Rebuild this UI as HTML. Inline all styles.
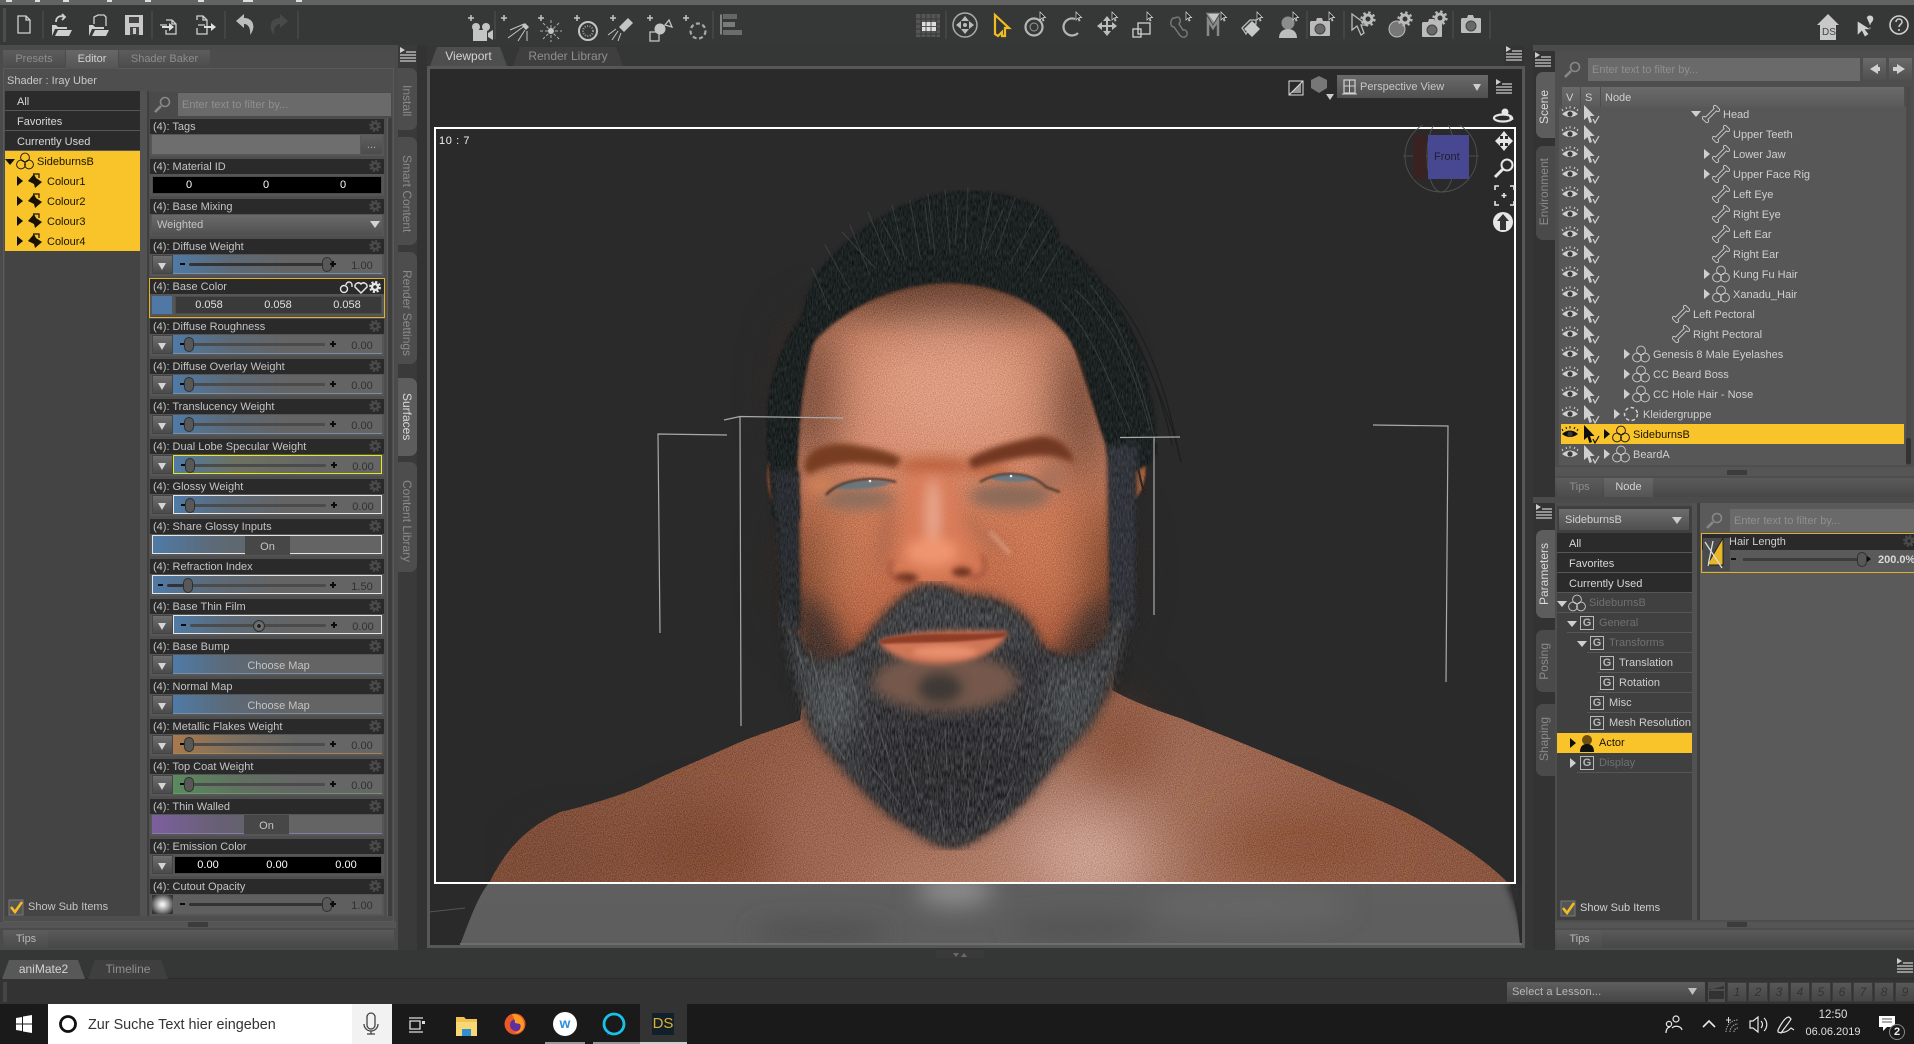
<!DOCTYPE html>
<html style="overflow:hidden;width:1914px;height:1044px"><head><meta charset="utf-8"><title>Daz Studio</title>
<style>
html,body{margin:0;padding:0;background:#353737;}
body{position:relative;width:1914px;height:1044px;overflow:hidden;font:11px/14px "Liberation Sans",sans-serif;color:#cfcfcf;}
div,span,i,b,em,s,u{position:absolute;display:block;font-style:normal;font-weight:normal;text-decoration:none;white-space:nowrap;box-sizing:border-box;}
.t{line-height:16px;}
.tab{background:linear-gradient(#5c5c5c,#4c4c4c);color:#8c8c8c;text-align:center;line-height:18px;}
.tab.on{background:linear-gradient(#686868,#555);color:#d2d2d2;}
.li{left:5px;width:135px;height:20px;background:#2b2b2b;border-bottom:1px solid #575757;color:#d8d8d8;line-height:22px;padding-left:12px;}
.y{color:#1b1400;}
.pr{left:150px;width:234px;height:37px;background:#565656;}
.pr>i{left:0;top:0;width:234px;height:15px;background:#2a2a2a;color:#c4c4c4;line-height:17px;padding-left:3px;}
.bt{left:2px;top:16px;width:21px;height:19px;background:linear-gradient(#6e6e6e,#4a4a4a);border:1px solid #444;}
.bt:after{content:"";position:absolute;left:5px;top:7px;border-left:4px solid transparent;border-right:4px solid transparent;border-top:7px solid #d4d4d4;}
.tr{left:23px;top:16px;width:209px;height:19px;background:linear-gradient(90deg,#4f7aa6,#5c6a78 26%,#646464 55%,#646464);border-bottom:1px solid #7a8fa8;}
.w{border:1px solid #e4e4e4;}
.f{left:2px;width:230px;}
.tr:before{content:"";position:absolute;left:7px;top:8px;width:5px;height:2px;background:#0c0c0c;}
.plus:after{content:"";position:absolute;left:157px;top:6px;width:6px;height:6px;background:linear-gradient(#0c0c0c,#0c0c0c) center/6px 2px no-repeat,linear-gradient(#0c0c0c,#0c0c0c) center/2px 6px no-repeat;}
.p2:after{left:177px;}
.p2:before{left:5px;}
.gv{left:16px;top:8px;width:136px;height:3px;background:#4b4b4b;border-radius:2px;}
.dk{background:#333;}
.th{top:2px;width:10px;height:15px;border-radius:5px;background:#585858;border:1px solid #2f2f2f;}
em{left:173px;top:4px;width:32px;text-align:center;color:#303030;line-height:14px;}
.no:before{display:none;}
.on1{left:92px;top:0;width:45px;height:19px;background:#474747;color:#c4c4c4;text-align:center;line-height:23px;}
.blk{left:2px;top:17px;width:230px;height:18px;background:#000;border:1px solid #4d4d4d;color:#fff;}
.blk u{top:1px;width:40px;text-align:center;line-height:15px;}
.cm{left:23px;top:16px;width:209px;height:19px;background:linear-gradient(90deg,#4f7aa6,#5c6a78 26%,#646464 55%);border-bottom:1px solid #7a8fa8;text-align:center;line-height:23px;color:#c4c4c4;padding-left:2px;}
.vt{writing-mode:vertical-rl;font-size:12px;line-height:14px;color:#8a8a8a;}
.g{width:14px;height:14px;border:1px solid #b8b8b8;color:#b8b8b8;font-size:11px;line-height:12px;text-align:center;font-weight:bold;background:#3e3e3e;}
.pt{line-height:16px;}
.ln{height:1px;background:#565656;}
.nb{top:982px;width:20px;height:20px;background:linear-gradient(#585858,#464646);border:1px solid #3c3c3c;color:#333;text-align:center;line-height:18px;font-style:italic;font-size:12px;}
.tp{clip-path:polygon(7px 0,calc(100% - 7px) 0,100% 100%,0 100%);}
</style></head><body>

<!-- title and toolbar -->
<div style="left:0;top:0;width:1914px;height:5px;background:#636363"></div>
<div style="left:6px;top:0;width:6px;height:2px;background:#ddd"></div><div style="left:35px;top:0;width:5px;height:2px;background:#ddd"></div><div style="left:63px;top:0;width:6px;height:2px;background:#ddd"></div><div style="left:107px;top:0;width:5px;height:2px;background:#ddd"></div><div style="left:145px;top:0;width:6px;height:2px;background:#ddd"></div><div style="left:198px;top:0;width:6px;height:2px;background:#ddd"></div><div style="left:243px;top:0;width:10px;height:2px;background:#ddd"></div><div style="left:296px;top:0;width:6px;height:2px;background:#ddd"></div>
<div style="left:0;top:5px;width:1914px;height:40px;background:#363838"></div>
<div style="left:3px;top:8px;width:3px;height:34px;background:#4d4d4d"></div>

<!-- left panel -->
<div style="left:0;top:45px;width:398px;height:905px;background:#4b4b4b"></div>
<div style="left:3px;top:68px;width:391px;height:854px;background:#4e4e4e;border:1px solid #5a5a5a"></div>
<div style="left:3px;top:50px;width:391px;height:18px;background:#4c4c4c"></div>
<div class="tab" style="left:3px;top:50px;width:62px;height:18px">Presets</div>
<div class="tab on" style="left:66px;top:50px;width:52px;height:19px">Editor</div>
<div class="tab" style="left:119px;top:50px;width:91px;height:18px">Shader Baker</div>
<div class="t" style="left:7px;top:73px;color:#c8c8c8">Shader : Iray Uber</div>
<div style="left:5px;top:91px;width:135px;height:825px;background:#444"></div>
<div style="left:140px;top:91px;width:9px;height:825px;background:#525252;border-right:2px solid #3f3f3f"></div>
<div class="li" style="top:91px">All</div>
<div class="li" style="top:111px">Favorites</div>
<div class="li" style="top:131px">Currently Used</div>
<div style="left:5px;top:151px;width:135px;height:100px;background:#f9c42a"></div>
<div class="t y" style="left:37px;top:154px">SideburnsB</div>
<div class="t y" style="left:47px;top:174px">Colour1</div>
<div class="t y" style="left:47px;top:194px">Colour2</div>
<div class="t y" style="left:47px;top:214px">Colour3</div>
<div class="t y" style="left:47px;top:234px">Colour4</div>
<div class="t" style="left:28px;top:899px;color:#c4c4c4">Show Sub Items</div>

<div style="left:149px;top:92px;width:243px;height:26px;background:#4a4a4a"></div>
<div style="left:178px;top:93px;width:213px;height:23px;background:#6a6a6a;color:#8f8f8f;line-height:25px;padding-left:4px">Enter text to filter by...</div>
<div style="left:387px;top:118px;width:5px;height:798px;background:#3e3e3e;border-left:1px solid #5e5e5e"></div>

<div class="pr" style="top:119px"><i>(4): Tags</i><div style="left:2px;top:16px;width:208px;height:19px;background:#6e6e6e"></div><div style="left:211px;top:16px;width:21px;height:19px;background:linear-gradient(#5f5f5f,#4c4c4c);color:#aaa;text-align:center;line-height:20px">...</div></div>
<div class="pr" style="top:159px"><i>(4): Material ID</i><div class="blk"><u style="left:16px">0</u><u style="left:93px">0</u><u style="left:170px">0</u></div></div>
<div class="pr" style="top:199px"><i>(4): Base Mixing</i><div style="left:2px;top:16px;width:230px;height:20px;background:linear-gradient(#6a6a6a,#505050);color:#c4c4c4;padding-left:5px;line-height:20px">Weighted</div></div>
<div class="pr" style="top:239px"><i>(4): Diffuse Weight</i><b class="bt"></b><div class="tr plus"><s class="gv dk"></s><s class="th" style="left:149px"></s><em>1.00</em></div></div>
<div class="pr" style="top:279px"><i>(4): Base Color</i><div style="left:2px;top:17px;width:20px;height:18px;background:#4f78a4"></div><div class="blk" style="left:25px;width:207px;background:#3a3a3a;color:#e0e0e0"><u style="left:13px">0.058</u><u style="left:82px">0.058</u><u style="left:151px">0.058</u></div></div>
<div class="pr" style="top:319px"><i>(4): Diffuse Roughness</i><b class="bt"></b><div class="tr plus"><s class="gv"></s><s class="th" style="left:11px"></s><em>0.00</em></div></div>
<div class="pr" style="top:359px"><i>(4): Diffuse Overlay Weight</i><b class="bt"></b><div class="tr plus"><s class="gv"></s><s class="th" style="left:11px"></s><em>0.00</em></div></div>
<div class="pr" style="top:399px"><i>(4): Translucency Weight</i><b class="bt"></b><div class="tr plus"><s class="gv"></s><s class="th" style="left:11px"></s><em>0.00</em></div></div>
<div class="pr" style="top:439px"><i>(4): Dual Lobe Specular Weight</i><b class="bt"></b><div class="tr plus" style="border:1px solid #e6e619;background:linear-gradient(90deg,#4f7aa6,#6d7160 30%,#666 70%)"><s class="gv"></s><s class="th" style="left:11px"></s><em>0.00</em></div></div>
<div class="pr" style="top:479px"><i>(4): Glossy Weight</i><b class="bt"></b><div class="tr plus w"><s class="gv"></s><s class="th" style="left:11px"></s><em>0.00</em></div></div>
<div class="pr" style="top:519px"><i>(4): Share Glossy Inputs</i><div class="tr no w f"><div class="on1">On</div></div></div>
<div class="pr" style="top:559px"><i>(4): Refraction Index</i><div class="tr plus p2 w f" style="left:2px"><s class="gv dk" style="left:14px;width:22px"></s><s class="gv" style="left:36px;width:137px"></s><s class="th" style="left:30px"></s><em style="left:193px">1.50</em></div></div>
<div class="pr" style="top:599px"><i>(4): Base Thin Film</i><b class="bt"></b><div class="tr plus w"><s class="gv"></s><s class="th" style="left:79px;width:12px;height:12px;top:4px;border-radius:6px;background:radial-gradient(#222 25%,#777 30%,#666 60%)"></s><em>0.00</em></div></div>
<div class="pr" style="top:639px"><i>(4): Base Bump</i><b class="bt"></b><div class="cm">Choose Map</div></div>
<div class="pr" style="top:679px"><i>(4): Normal Map</i><b class="bt"></b><div class="cm">Choose Map</div></div>
<div class="pr" style="top:719px"><i>(4): Metallic Flakes Weight</i><b class="bt"></b><div class="tr plus" style="background:linear-gradient(90deg,#a8794c,#7c6f5e 30%,#666 60%);border-bottom-color:#a88656"><s class="gv"></s><s class="th" style="left:11px"></s><em>0.00</em></div></div>
<div class="pr" style="top:759px"><i>(4): Top Coat Weight</i><b class="bt"></b><div class="tr plus" style="background:linear-gradient(90deg,#5a8a5e,#607260 30%,#666 60%);border-bottom-color:#6a9a6a"><s class="gv"></s><s class="th" style="left:11px"></s><em>0.00</em></div></div>
<div class="pr" style="top:799px"><i>(4): Thin Walled</i><div class="tr no f" style="background:linear-gradient(90deg,#7c5f9e,#666073 30%,#646464 60%);border-bottom-color:#8a7aa8"><div class="on1">On</div></div></div>
<div class="pr" style="top:839px"><i>(4): Emission Color</i><b class="bt"></b><div class="blk" style="left:24px;width:208px"><u style="left:13px">0.00</u><u style="left:82px">0.00</u><u style="left:151px">0.00</u></div></div>
<div class="pr" style="top:879px"><i>(4): Cutout Opacity</i><div style="left:2px;top:16px;width:21px;height:19px;background:radial-gradient(#eee 10%,#999 45%,#333 85%)"></div><div class="tr plus" style="background:#5f5f5f;border-bottom:0"><s class="gv dk"></s><s class="th" style="left:149px"></s><em>1.00</em></div></div>
<div style="left:149px;top:278px;width:236px;height:40px;border:1px solid #e2b02a"></div>

<div style="left:0;top:922px;width:396px;height:6px;background:#555"></div>
<div style="left:188px;top:922px;width:20px;height:5px;background:#3c3c3c"></div>
<div style="left:3px;top:930px;width:391px;height:18px;background:linear-gradient(#5a5a5a,#484848)"></div>
<div class="tab" style="left:4px;top:930px;width:44px;height:18px;color:#b5b5b5;line-height:19px">Tips</div>

<!-- left vertical tabs -->
<div style="left:398px;top:45px;width:19px;height:905px;background:#3a3a3a"></div>
<div style="left:398px;top:68px;width:19px;height:62px;background:#4d4d4d;border-radius:0 7px 7px 0"></div>
<div style="left:398px;top:137px;width:19px;height:108px;background:#4d4d4d;border-radius:0 7px 7px 0"></div>
<div style="left:398px;top:252px;width:19px;height:112px;background:#4d4d4d;border-radius:0 7px 7px 0"></div>
<div style="left:398px;top:378px;width:19px;height:78px;background:#5d5d5d;border-radius:0 7px 7px 0"></div>
<div style="left:398px;top:462px;width:19px;height:110px;background:#4d4d4d;border-radius:0 7px 7px 0"></div>
<div class="vt" style="left:400px;top:85px">Install</div>
<div class="vt" style="left:400px;top:155px">Smart Content</div>
<div class="vt" style="left:400px;top:270px">Render Settings</div>
<div class="vt" style="left:400px;top:393px;color:#d8d8d8">Surfaces</div>
<div class="vt" style="left:400px;top:480px">Content Library</div>
<div style="left:417px;top:45px;width:10px;height:905px;background:#333"></div>

<!-- viewport -->
<div class="tp" style="left:430px;top:47px;width:77px;height:19px;background:#4e4e4e;text-align:center;font-size:12px;line-height:19px;color:#d4d4d4">Viewport</div>
<div class="tp" style="left:513px;top:47px;width:110px;height:19px;background:#3f3f3f;text-align:center;font-size:12px;line-height:19px;color:#8f8f8f">Render Library</div>
<div style="left:427px;top:66px;width:1098px;height:882px;background:#2a2a2a;border:3px solid #575757"></div>

<svg style="position:absolute;left:0;top:0" width="1914" height="1044" viewBox="0 0 1914 1044">
<defs>
<clipPath id="fr"><rect x="436" y="129" width="1078" height="753"/></clipPath>
<clipPath id="fb"><rect x="430" y="884" width="1092" height="61"/></clipPath>
<filter id="b1"><feGaussianBlur stdDeviation="1"/></filter>
<filter id="b2" x="-20%" y="-20%" width="140%" height="140%"><feGaussianBlur stdDeviation="2.2"/></filter>
<filter id="b3" x="-30%" y="-30%" width="160%" height="160%"><feGaussianBlur stdDeviation="3"/></filter>
<filter id="b6" x="-50%" y="-50%" width="200%" height="200%"><feGaussianBlur stdDeviation="6"/></filter>
<filter id="b12" x="-60%" y="-60%" width="220%" height="220%"><feGaussianBlur stdDeviation="12"/></filter>
<filter id="b25" x="-80%" y="-80%" width="260%" height="260%"><feGaussianBlur stdDeviation="25"/></filter>
<filter id="gr" x="0" y="0" width="1" height="1" color-interpolation-filters="sRGB"><feTurbulence type="fractalNoise" baseFrequency="1.1" numOctaves="2" seed="3"/><feColorMatrix type="matrix" values="1 0 0 0 0 1 0 0 0 0 1 0 0 0 0 0 0 0 0 1" result="g"/><feComposite in="SourceGraphic" in2="g" operator="arithmetic" k1="0" k2="1" k3=".36" k4="-.18" result="c"/><feComposite in="c" in2="SourceAlpha" operator="in"/></filter>
<filter id="hr" x="0" y="0" width="1" height="1" color-interpolation-filters="sRGB"><feTurbulence type="fractalNoise" baseFrequency=".8 .18" numOctaves="2" seed="8"/><feColorMatrix type="matrix" values="1 0 0 0 0 1 0 0 0 0 1 0 0 0 0 0 0 0 0 1" result="g"/><feComposite in="SourceGraphic" in2="g" operator="arithmetic" k1="0" k2="1" k3=".2" k4="-.1" result="c"/><feComposite in="c" in2="SourceAlpha" operator="in"/></filter>
<filter id="bd" x="0" y="0" width="1" height="1" color-interpolation-filters="sRGB"><feTurbulence type="fractalNoise" baseFrequency=".7 .14" numOctaves="2" seed="5"/><feColorMatrix type="matrix" values="1 0 0 0 0 1 0 0 0 0 1 0 0 0 0 0 0 0 0 1" result="g"/><feComposite in="SourceGraphic" in2="g" operator="arithmetic" k1="0" k2="1" k3=".34" k4="-.17" result="c"/><feComposite in="c" in2="SourceAlpha" operator="in"/></filter>
<radialGradient id="sh" gradientUnits="userSpaceOnUse" cx="1075" cy="870" r="560"><stop offset="0" stop-color="#c09484"/><stop offset=".22" stop-color="#a26f5a"/><stop offset=".6" stop-color="#905a44"/><stop offset="1" stop-color="#7f4f3a"/></radialGradient>
<linearGradient id="fc" x1="0" y1="0" x2="0" y2="1"><stop offset="0" stop-color="#7f5240"/><stop offset=".16" stop-color="#c98467"/><stop offset=".4" stop-color="#d48d70"/><stop offset=".62" stop-color="#c97654"/><stop offset="1" stop-color="#a8583a"/></linearGradient>
<linearGradient id="msh" x1="0" y1="0" x2="0" y2="1"><stop offset="0" stop-color="#5f5f5f"/><stop offset="1" stop-color="#5e5e5e"/></linearGradient>

<g id="eye"><path d="M-8,0Q0,-7 8,0Q0,6 -8,0Z" fill="currentColor"/><circle r="2.6" fill="#3a3a3a"/><path d="M-7,-3L-8,-5M-3.5,-5L-4,-7M0,-5.5V-8M4,-5L5,-7M7,-3L8,-5" stroke="currentColor" fill="none"/></g>
<g id="cur"><path d="M-7,-9L-7,6L-3.5,3L-1.5,9L1,8L-1,2L3.5,2Z" fill="currentColor"/><path d="M2,5L4,9L8,2" stroke="currentColor" stroke-width="1.2" fill="none"/></g>
<g id="bn"><path d="M-5,5L5,-5M-7,4L-4,7M4,-7L7,-4" stroke="currentColor" stroke-width="4.2" stroke-linecap="round" fill="none"/><path d="M-5,5L5,-5M-7,4L-4,7M4,-7L7,-4" stroke="#575757" stroke-width="2.4" stroke-linecap="round" fill="none"/></g>
<g id="tr"><g fill="none" stroke="currentColor" stroke-width=".9"><circle cx="0" cy="-3.5" r="4.4"/><circle cx="-4" cy="3.5" r="4.4"/><circle cx="4" cy="3.5" r="4.4"/></g></g>
<g id="ar"><path d="M-3,-5L3,0L-3,5Z" fill="currentColor"/></g>
<g id="ad"><path d="M-5,-3L5,-3L0,3Z" fill="currentColor"/></g>
<g id="gear"><circle r="3" fill="none" stroke="currentColor" stroke-width="2.4"/><circle r="5" fill="none" stroke="currentColor" stroke-width="2" stroke-dasharray="2.2 1.73"/></g>
<g id="mat"><path d="M-7,0L-1,-7L1,-3L7,1L0,7L-1,3Z" fill="#1a1200"/><path d="M-2,-7h6v4" fill="none" stroke="#1a1200" stroke-width="1.2"/></g>
<g id="men"><path d="M-8,-8L-3,-5L-8,-2Z" fill="#ccc"/><path d="M-2,-3H8M-8,0H8M-8,3H8M-8,6H8" stroke="#ccc" stroke-width="1.2"/></g>
<g id="pc"><path d="M5,-8L5,0L7,-2L8,1L9,0.6L8,-2.4L10.6,-2.4Z" fill="#222" stroke="#ddd" stroke-width=".7"/></g>
<g id="cam"><path d="M-11,-6h5l1,-3h5l1,3h6a1,1 0 0 1 1,1v13a1,1 0 0 1 -1,1h-18a1,1 0 0 1 -1,-1v-13z" fill="#bbb"/><circle cx="-2" cy="2" r="5" fill="#686868" stroke="#444"/></g>
<g id="pg"><circle cx="0" cy="0" r="4" fill="none" stroke="#bbb" stroke-width="3"/><circle cx="0" cy="0" r="6.5" fill="none" stroke="#bbb" stroke-width="2.2" stroke-dasharray="2.4 2.7"/></g>
</defs>

<!-- figure -->
<g clip-path="url(#fr)">
<g filter="url(#gr)">
<path d="M486,890C500,858 520,830 560,812C590,805 620,795 640,787C670,772 700,760 740,742C765,732 785,726 800,720L810,640L1120,640L1112,690C1130,700 1150,708 1180,718C1240,742 1290,762 1340,784C1380,800 1410,812 1440,832C1470,850 1495,868 1515,890Z" fill="url(#sh)"/>
<g filter="url(#b25)">
<ellipse cx="700" cy="850" rx="70" ry="45" fill="#7a4630" opacity=".7"/>
<ellipse cx="570" cy="860" rx="50" ry="30" fill="#7a4a36" opacity=".6"/>
<ellipse cx="1300" cy="845" rx="90" ry="40" fill="#84492f" opacity=".6"/>
<ellipse cx="1085" cy="860" rx="55" ry="40" fill="#d2a898" opacity=".8"/>
<ellipse cx="960" cy="880" rx="120" ry="24" fill="#b4806c" opacity=".8"/>
<ellipse cx="830" cy="835" rx="45" ry="70" fill="#a06a54" opacity=".7"/>
<ellipse cx="1120" cy="740" rx="40" ry="50" fill="#87503a" opacity=".8"/>
</g>
<!-- ears -->
<path d="M769,460C763,475 768,505 780,515L790,470Z" fill="#94563a" filter="url(#b1)"/>
<path d="M1131,448C1142,445 1148,455 1146,475C1144,490 1138,500 1128,505Z" fill="#a5613f" filter="url(#b1)"/>
<path d="M1136,462C1140,470 1140,485 1146,495" stroke="#2a2320" stroke-width="2" fill="none"/>
<!-- face -->
<path d="M815,333C830,300 880,270 950,270C1020,272 1060,310 1075,350C1088,390 1100,430 1120,470L1132,600L1105,690L815,690L784,600L783,470C790,420 800,370 815,333Z" fill="url(#fc)" filter="url(#b1)"/>
<g filter="url(#b25)">
<ellipse cx="950" cy="385" rx="80" ry="58" fill="#e2a289" opacity=".75"/>
<ellipse cx="808" cy="395" rx="26" ry="85" fill="#6a4232"/>
<ellipse cx="1082" cy="405" rx="26" ry="85" fill="#6a4232"/>
<ellipse cx="950" cy="290" rx="120" ry="24" fill="#5a3828"/>
<ellipse cx="840" cy="550" rx="30" ry="45" fill="#c87a56"/>
<ellipse cx="1058" cy="550" rx="34" ry="45" fill="#cc7a56"/>
<ellipse cx="802" cy="570" rx="20" ry="70" fill="#54301f"/>
<ellipse cx="1106" cy="570" rx="22" ry="70" fill="#54301f"/>
</g>
<g filter="url(#b12)">
<path d="M790,585L826,610L858,668L800,680Z" fill="#3d312e" opacity=".9"/>
<path d="M1122,585L1082,612L1048,668L1105,680Z" fill="#3d312e" opacity=".9"/>
</g>
</g>
<!-- hair -->
<g filter="url(#hr)">
<path d="M766,445C764,410 770,375 781,350C790,330 796,322 802,314C806,290 818,268 832,255C858,228 895,205 930,195C970,186 1010,190 1042,208C1056,222 1062,232 1058,240C1095,262 1128,310 1146,370C1154,405 1158,430 1158,452C1150,465 1145,470 1135,470L1120,490L1100,430C1092,400 1086,380 1079,356C1056,312 1010,286 950,284C892,284 842,312 815,342C803,378 800,425 798,475L800,520L772,520Z" fill="#1f2123" filter="url(#b2)"/>
<path d="M773,470L800,470L802,630L780,630Z" fill="#2c2e32" filter="url(#b3)"/>
<path d="M1106,445L1138,445L1138,630L1108,630Z" fill="#33353a" filter="url(#b3)"/>
</g>
<g fill="none" stroke-linecap="round">
<path d="M830,310L812,268M850,290L825,245M870,275L850,225M890,265L868,212M905,260L892,205M920,256L910,200M935,254L928,194M950,252L945,190M965,252L968,188M980,254L992,192M995,257L1015,198M1010,264L1040,208M1025,272L1052,226M1040,282L1062,244M875,268L842,232M900,255L880,218M930,245L925,205M955,245L958,205M985,250L1003,210" stroke="#5d6163" stroke-width="1" opacity=".4"/>
<path d="M1060,300C1090,330 1110,380 1130,430M1075,290C1110,320 1135,370 1150,430M1090,285C1120,320 1140,375 1155,440" stroke="#505456" stroke-width="1" opacity=".5"/>
<path d="M1105,285C1140,320 1165,380 1178,450M1130,330C1155,380 1172,420 1181,462M1120,310C1150,360 1165,410 1172,445" stroke="#1a1c1d" stroke-width="1.3" opacity=".85"/>
</g>
<!-- brows and band -->
<g filter="url(#b6)"><ellipse cx="935" cy="466" rx="38" ry="8" fill="#b2502a" opacity=".7"/><ellipse cx="990" cy="470" rx="22" ry="5" fill="#b0502a" opacity=".7"/></g>
<g filter="url(#b3)">
<path d="M804,468C806,447 830,440 860,446C880,449 895,453 902,459L895,468C870,463 830,458 810,476Z" fill="#773c22"/>
<path d="M968,460C985,447 1020,440 1040,436C1060,436 1072,450 1074,462L1060,458C1040,451 1000,462 972,469Z" fill="#733820"/>
</g>
<!-- eye sockets -->
<g filter="url(#b6)">
<ellipse cx="858" cy="499" rx="36" ry="11" fill="#7f6a5c" opacity=".8"/>
<ellipse cx="1010" cy="496" rx="40" ry="13" fill="#7b6658" opacity=".8"/>
<ellipse cx="820" cy="485" rx="14" ry="9" fill="#d08258"/>
<ellipse cx="1052" cy="478" rx="14" ry="10" fill="#a8725a"/>
</g>
<!-- eyes -->
<g filter="url(#b1)">
<path d="M835,489C848,481 870,479 892,483C878,489 852,490 835,489Z" fill="#6a767c"/>
<path d="M826,495C838,481 868,475 896,482" stroke="#332722" stroke-width="2" fill="none"/>
<path d="M988,478C1002,473 1022,473 1036,480C1022,483 1002,483 988,478Z" fill="#6c7880"/>
<path d="M980,482C1000,470 1030,471 1046,487L1060,492" stroke="#3d302a" stroke-width="2" fill="none"/>
</g>
<circle cx="870" cy="481" r="1.3" fill="#eef"/><circle cx="1011" cy="476" r="1.3" fill="#eef"/>
<!-- nose -->
<g filter="url(#b6)">
<path d="M905,480C920,470 945,470 955,480C955,510 975,550 985,565C975,590 905,590 890,570C905,545 910,510 905,480Z" fill="#dc7c58" opacity=".8"/>
<ellipse cx="933" cy="515" rx="7" ry="36" fill="#ecb09a" opacity=".85"/>
<ellipse cx="932" cy="552" rx="26" ry="14" fill="#f0966f"/>
<ellipse cx="885" cy="535" rx="8" ry="38" fill="#a06048" opacity=".4" transform="rotate(10 885 535)"/>
<path d="M965,520L1003,550" stroke="#a66a50" stroke-width="10" fill="none" opacity=".5"/>
</g>
<path d="M990,532C997,539 1005,548 1010,554" stroke="#e8b8a2" stroke-width="2.4" fill="none" filter="url(#b2)" opacity=".8"/>
<g filter="url(#b3)"><ellipse cx="906" cy="578" rx="12" ry="5" fill="#703424"/><ellipse cx="962" cy="572" rx="10" ry="5" fill="#703424"/><path d="M892,560C885,575 895,582 905,580" stroke="#9a4a34" stroke-width="3" fill="none"/><path d="M982,555C990,570 982,578 970,578" stroke="#9a4a34" stroke-width="3" fill="none"/></g>
<!-- beard -->
<g filter="url(#bd)">
<path d="M778,600C780,640 790,690 808,725C832,772 880,812 920,838C935,848 948,852 958,850C975,846 990,832 1005,822C1040,790 1075,745 1100,712C1122,680 1130,640 1134,600L1114,605C1105,635 1090,655 1065,658C1050,658 1042,640 1034,622C1015,600 990,590 968,592C950,584 930,576 915,585C895,595 880,615 862,636C850,652 835,665 818,660C805,645 795,625 792,600Z" fill="#404244" filter="url(#b6)"/>
<path d="M815,670C840,760 900,830 955,842C1000,825 1070,750 1092,665C1040,640 880,640 815,670Z" fill="#37393b" filter="url(#b6)"/>
<ellipse cx="950" cy="770" rx="80" ry="55" fill="#303234" filter="url(#b12)"/>
<ellipse cx="835" cy="700" rx="24" ry="42" fill="#505355" filter="url(#b12)"/>
<ellipse cx="1070" cy="700" rx="22" ry="42" fill="#4a4d4f" filter="url(#b12)"/>
</g>
<g stroke="#7a7e80" stroke-width="1" opacity=".4" fill="none">
<path d="M840,690L850,725M860,720L872,755M885,745L895,780M910,770L920,805M930,800L938,832M950,780L952,820M970,790L966,825M990,760L982,800M1020,730L1008,770M1045,700L1032,735M1070,680L1058,715M1095,660L1085,695M810,650L820,690M795,640L805,675M830,735L845,760M870,765L890,790M1000,800L985,825M1065,730L1045,760M825,690L835,725M875,715L885,750M900,735L908,770M925,740L930,780M945,730L947,770M965,735L963,775M985,725L980,765M1005,715L998,755M1030,690L1022,730M1055,670L1045,705M850,670L858,705M875,770L900,805M1015,780L1000,810M940,810L945,838"/>
</g>
<!-- mouth -->
<ellipse cx="945" cy="682" rx="72" ry="29" fill="#75584c" filter="url(#b6)"/>
<ellipse cx="940" cy="688" rx="22" ry="15" fill="#3e3836" filter="url(#b6)"/>
<path d="M878,642C910,628 975,630 1008,632C1000,652 975,662 940,664C905,664 888,655 878,642Z" fill="#cf7656" filter="url(#b3)"/>
<path d="M880,640C920,630 970,636 1008,632L1004,637C960,644 915,642 882,644Z" fill="#8f3c28" filter="url(#b1)"/>
<ellipse cx="945" cy="652" rx="32" ry="6" fill="#e8906e" filter="url(#b3)"/>
</g>
<!-- guides -->
<g fill="none" stroke="#a9a9a9" stroke-width="1.2">
<path d="M727,435L658,434L660,633"/>
<path d="M724,420L740,416.5L843,418M740,417L741,726"/>
<path d="M1120,437.5L1180,437M1154,437V615"/>
<path d="M1373,425L1448,426L1446,682"/>
</g>
<!-- lower mesh -->
<g clip-path="url(#fb)">
<rect x="430" y="884" width="1092" height="61" fill="#2a2a2a"/>
<path d="M460,945C468,925 476,900 488,884H1510C1514,900 1518,915 1520,945Z" fill="url(#msh)"/>
<g filter="url(#b12)"><ellipse cx="955" cy="890" rx="38" ry="16" fill="#8e8e8e"/><ellipse cx="820" cy="932" rx="70" ry="10" fill="#505050"/><ellipse cx="1080" cy="928" rx="70" ry="12" fill="#525252"/><ellipse cx="1250" cy="905" rx="100" ry="18" fill="#666"/></g>
<path d="M1505,884C1513,900 1518,915 1522,935V884Z" fill="#2e2e2e" filter="url(#b3)"/>
<path d="M429,912L465,908" stroke="#555"/>
<rect x="460" y="943" width="1062" height="2" fill="#6e6e6e"/>
</g>
<rect x="435" y="128" width="1080" height="755" fill="none" stroke="#fff" stroke-width="2"/>
</svg>
<div class="t" style="left:439px;top:133px;color:#f0f0f0;letter-spacing:.6px">10 : 7</div>

<!-- dropdown -->
<div style="left:1337px;top:75px;width:151px;height:23px;background:linear-gradient(#6a6a6a,#4f4f4f);color:#c8c8c8;line-height:25px;padding-left:23px">Perspective View</div>
<svg style="position:absolute;left:1400px;top:125px" width="90" height="90" viewBox="1400 125 90 90"><g fill="none" stroke="#555" stroke-width=".8"><circle cx="1441" cy="156" r="36"/><ellipse cx="1441" cy="156" rx="14" ry="36"/><path d="M1403,156H1479"/></g><rect x="1413" y="135" width="13" height="44" fill="#3a2222"/><rect x="1428" y="135" width="41" height="44" fill="#484892"/></svg>
<div class="t" style="left:1434px;top:149px;color:#1e1e30;font-size:11px">Front</div>

<!-- middle gutter -->
<div style="left:1525px;top:45px;width:8px;height:905px;background:#363636"></div>
<div style="left:1504px;top:46px;width:20px;height:20px;background:#333"></div>

<!-- right panel -->
<div style="left:1533px;top:45px;width:381px;height:905px;background:#333"></div>
<div style="left:1533px;top:45px;width:381px;height:6px;background:#4b4b4b"></div>
<div style="left:1555px;top:51px;width:359px;height:446px;background:#4e4e4e"></div>
<div style="left:1536px;top:72px;width:19px;height:66px;background:#5d5d5d;border-radius:7px 0 0 7px"></div>
<div style="left:1536px;top:146px;width:19px;height:94px;background:#4a4a4a;border-radius:7px 0 0 7px"></div>
<div class="vt" style="left:1537px;top:90px;color:#d8d8d8;transform:rotate(180deg)">Scene</div>
<div class="vt" style="left:1537px;top:158px;transform:rotate(180deg)">Environment</div>
<div style="left:1588px;top:58px;width:272px;height:23px;background:#6a6a6a;color:#8f8f8f;line-height:25px;padding-left:4px">Enter text to filter by...</div>
<div style="left:1863px;top:58px;width:23px;height:22px;background:linear-gradient(#6a6a6a,#505050)"></div>
<div style="left:1889px;top:58px;width:23px;height:22px;background:linear-gradient(#6a6a6a,#505050)"></div>
<div style="left:1559px;top:107px;width:347px;height:358px;background:#575757"></div>
<div style="left:1906px;top:87px;width:5px;height:378px;background:#4a4a4a"></div>
<div style="left:1562px;top:87px;width:18px;height:20px;background:linear-gradient(#6a6a6a,#5a5a5a);line-height:22px;padding-left:4px">V</div>
<div style="left:1581px;top:87px;width:19px;height:20px;background:linear-gradient(#6a6a6a,#5a5a5a);line-height:22px;padding-left:4px">S</div>
<div style="left:1601px;top:87px;width:303px;height:20px;background:linear-gradient(#6a6a6a,#5a5a5a);line-height:22px;padding-left:4px">Node</div>
<div style="left:1561px;top:424px;width:343px;height:20px;background:#f9c42a"></div>
<div class="pt" style="left:1723px;top:107px">Head</div>
<div class="pt" style="left:1733px;top:127px">Upper Teeth</div>
<div class="pt" style="left:1733px;top:147px">Lower Jaw</div>
<div class="pt" style="left:1733px;top:167px">Upper Face Rig</div>
<div class="pt" style="left:1733px;top:187px">Left Eye</div>
<div class="pt" style="left:1733px;top:207px">Right Eye</div>
<div class="pt" style="left:1733px;top:227px">Left Ear</div>
<div class="pt" style="left:1733px;top:247px">Right Ear</div>
<div class="pt" style="left:1733px;top:267px">Kung Fu Hair</div>
<div class="pt" style="left:1733px;top:287px">Xanadu_Hair</div>
<div class="pt" style="left:1693px;top:307px">Left Pectoral</div>
<div class="pt" style="left:1693px;top:327px">Right Pectoral</div>
<div class="pt" style="left:1653px;top:347px">Genesis 8 Male Eyelashes</div>
<div class="pt" style="left:1653px;top:367px">CC Beard Boss</div>
<div class="pt" style="left:1653px;top:387px">CC Hole Hair - Nose</div>
<div class="pt" style="left:1643px;top:407px">Kleidergruppe</div>
<div class="pt" style="left:1633px;top:427px;color:#1b1400">SideburnsB</div>
<div class="pt" style="left:1633px;top:447px">BeardA</div>
<div style="left:1555px;top:467px;width:359px;height:9px;background:#555"></div>
<div style="left:1727px;top:470px;width:20px;height:5px;background:#3c3c3c"></div>
<div style="left:1555px;top:478px;width:359px;height:19px;background:linear-gradient(#5a5a5a,#484848)"></div>
<div class="tab" style="left:1557px;top:478px;width:45px;height:19px;color:#8c8c8c;line-height:19px">Tips</div>
<div class="tab on" style="left:1604px;top:478px;width:49px;height:19px;line-height:19px">Node</div>
<div style="left:1533px;top:497px;width:381px;height:6px;background:#4b4b4b"></div>

<!-- parameters -->
<div style="left:1536px;top:530px;width:19px;height:88px;background:#5d5d5d;border-radius:7px 0 0 7px"></div>
<div style="left:1536px;top:630px;width:19px;height:62px;background:#4a4a4a;border-radius:7px 0 0 7px"></div>
<div style="left:1536px;top:704px;width:19px;height:72px;background:#4a4a4a;border-radius:7px 0 0 7px"></div>
<div class="vt" style="left:1537px;top:543px;color:#d8d8d8;transform:rotate(180deg)">Parameters</div>
<div class="vt" style="left:1537px;top:643px;transform:rotate(180deg)">Posing</div>
<div class="vt" style="left:1537px;top:717px;transform:rotate(180deg)">Shaping</div>
<div style="left:1555px;top:503px;width:359px;height:447px;background:#4e4e4e"></div>
<div style="left:1557px;top:506px;width:135px;height:414px;background:#404040"></div>
<div style="left:1692px;top:503px;width:8px;height:417px;background:#525252;border-right:3px solid #3e3e3e"></div>
<div style="left:1700px;top:503px;width:214px;height:417px;background:#5a5a5a"></div>
<div style="left:1559px;top:509px;width:130px;height:21px;background:linear-gradient(#6c6c6c,#505050);line-height:22px;padding-left:6px;color:#d0d0d0">SideburnsB</div>
<div class="li" style="left:1557px;top:533px">All</div>
<div class="li" style="left:1557px;top:553px">Favorites</div>
<div class="li" style="left:1557px;top:573px">Currently Used</div>
<div class="ln" style="left:1557px;top:612px;width:135px"></div>
<div class="ln" style="left:1567px;top:632px;width:125px"></div>
<div class="ln" style="left:1587px;top:652px;width:105px"></div>
<div class="ln" style="left:1597px;top:672px;width:95px"></div>
<div class="ln" style="left:1597px;top:692px;width:95px"></div>
<div class="ln" style="left:1587px;top:712px;width:105px"></div>
<div class="ln" style="left:1587px;top:732px;width:105px"></div>
<div class="ln" style="left:1577px;top:772px;width:115px"></div>
<div style="left:1557px;top:733px;width:135px;height:20px;background:#f9c42a"></div>
<div class="pt" style="left:1589px;top:595px;color:#707070">SideburnsB</div>
<div class="g" style="left:1580px;top:616px">G</div><div class="pt" style="left:1599px;top:615px;color:#707070">General</div>
<div class="g" style="left:1590px;top:636px">G</div><div class="pt" style="left:1609px;top:635px;color:#707070">Transforms</div>
<div class="g" style="left:1600px;top:656px">G</div><div class="pt" style="left:1619px;top:655px">Translation</div>
<div class="g" style="left:1600px;top:676px">G</div><div class="pt" style="left:1619px;top:675px">Rotation</div>
<div class="g" style="left:1590px;top:696px">G</div><div class="pt" style="left:1609px;top:695px">Misc</div>
<div class="g" style="left:1590px;top:716px">G</div><div class="pt" style="left:1609px;top:715px">Mesh Resolution</div>
<div class="pt" style="left:1599px;top:735px;color:#1b1400">Actor</div>
<div class="g" style="left:1580px;top:756px">G</div><div class="pt" style="left:1599px;top:755px;color:#707070">Display</div>
<div class="pt" style="left:1580px;top:900px">Show Sub Items</div>
<div style="left:1730px;top:509px;width:184px;height:23px;background:#6a6a6a;color:#8f8f8f;line-height:24px;padding-left:4px">Enter text to filter by...</div>
<div style="left:1701px;top:533px;width:213px;height:40px;background:#5a5a5a;border:1px solid #e2b02a;border-right:0"></div>
<div style="left:1702px;top:534px;width:212px;height:16px;background:#2a2a2a;color:#cfcfcf;line-height:16px;padding-left:27px">Hair Length</div>
<div style="left:1703px;top:538px;width:27px;height:33px;background:#4a4a4a"></div>
<div style="left:1743px;top:558px;width:118px;height:3px;background:#3c3c3c"></div>
<div style="left:1857px;top:552px;width:10px;height:15px;border-radius:5px;background:#585858;border:1px solid #2f2f2f"></div>
<div style="left:1731px;top:558px;width:5px;height:2px;background:#111"></div>
<div style="left:1878px;top:553px;color:#d8d8d8;font-weight:bold;font-size:11px;line-height:14px">200.0%</div>
<div style="left:1555px;top:922px;width:359px;height:6px;background:#555"></div>
<div style="left:1727px;top:922px;width:20px;height:5px;background:#3c3c3c"></div>
<div style="left:1555px;top:930px;width:359px;height:18px;background:linear-gradient(#5a5a5a,#484848)"></div>
<div class="tab" style="left:1557px;top:930px;width:45px;height:18px;color:#b5b5b5;line-height:19px">Tips</div>

<!-- bottom -->
<div style="left:0;top:950px;width:1914px;height:28px;background:#353737"></div>
<div style="left:0;top:978px;width:1914px;height:26px;background:#333;border-top:1px solid #2c2c2c"></div>
<div style="left:936px;top:950px;width:48px;height:8px;background:#3a3a3a"></div>
<div class="tp" style="left:2px;top:960px;width:83px;height:19px;background:#585858;text-align:center;font-size:12px;line-height:18px;color:#d4d4d4">aniMate2</div>
<div class="tp" style="left:88px;top:960px;width:80px;height:19px;background:#3f3f3f;text-align:center;font-size:12px;line-height:18px;color:#8f8f8f">Timeline</div>
<div style="left:3px;top:982px;width:4px;height:20px;background:#454545"></div>
<div style="left:1507px;top:982px;width:198px;height:20px;background:linear-gradient(#5e5e5e,#464646);color:#b8b8b8;line-height:20px;padding-left:5px;letter-spacing:.1px">Select a Lesson...</div>
<div class="nb" style="left:1727px">1</div><div class="nb" style="left:1748px">2</div><div class="nb" style="left:1769px">3</div><div class="nb" style="left:1790px">4</div><div class="nb" style="left:1811px">5</div><div class="nb" style="left:1832px">6</div><div class="nb" style="left:1853px">7</div><div class="nb" style="left:1874px">8</div><div class="nb" style="left:1895px">9</div>

<!-- taskbar -->
<div style="left:0;top:1004px;width:1914px;height:40px;background:#1a1a1a"></div>
<div style="left:48px;top:1004px;width:344px;height:40px;background:#fff"></div>
<div style="left:88px;top:1006px;height:38px;color:#333;font-size:14.4px;line-height:38px">Zur Suche Text hier eingeben</div>
<div style="left:352px;top:1004px;width:40px;height:40px;background:#f2f2f2"></div>
<div style="left:640px;top:1004px;width:47px;height:40px;background:#333"></div>
<div style="left:545px;top:1042px;width:40px;height:2px;background:#999"></div>
<div style="left:593px;top:1042px;width:47px;height:2px;background:#999"></div>
<div style="left:640px;top:1042px;width:47px;height:2px;background:#ccc"></div>
<div style="left:555px;top:1013px;width:20px;height:20px;color:#2a8fe0;text-align:center;line-height:20px;font-weight:bold;font-size:14px;z-index:3">w</div>
<div style="left:652px;top:1013px;width:22px;height:22px;background:#12202c;color:#e0b030;font-size:15px;line-height:21px;text-align:center;z-index:3">DS</div>
<div style="left:1803px;top:1008px;width:60px;text-align:center;color:#e0e0e0;line-height:14px;font-size:11.5px">12:50</div>
<div style="left:1803px;top:1025px;width:60px;text-align:center;color:#e0e0e0;line-height:14px;font-size:11px">06.06.2019</div>
<div style="left:1889px;top:1024px;width:16px;height:16px;background:#1a1a1a;border:1px solid #888;border-radius:8px;text-align:center;line-height:14px;color:#eee;font-weight:bold;z-index:3;font-size:11px">2</div>

<!-- icon overlay -->
<svg style="position:absolute;left:0;top:0;z-index:2;pointer-events:none" width="1914" height="1044" viewBox="0 0 1914 1044">
<!-- toolbar separators -->
<g stroke="#505050"><path d="M43,11V39M152,11V39M225,11V39M298,11V39M495,11V39M713,11V39M946,11V39M1307,11V39M1344,11V39M1453,11V39M1490,11V39"/></g>
<!-- file icons -->
<g fill="none" stroke="#d0d0d0" stroke-width="1.3">
<path d="M18,16h8l4,4v13h-12zM26,16v4h4"/>
<path d="M166,20h6l4,4v10h-10v-4M160,25h7M172,20v4h4"/><path d="M197,20v-4h6l4,4v14h-10v-6M203,16v4h4M198,25h7"/>
</g>
<path d="M52,36V25h4l2,2h9v2h-12l-3,7zM55,36l3,-6h14l-3,6z" fill="#cfcfcf"/>
<path d="M56,22C56,17 60,15 64,17M62,14l3,3l-3,3" fill="none" stroke="#cfcfcf" stroke-width="1.8"/>
<path d="M89,36V25h4l2,2h9v2h-12l-3,7zM92,36l3,-6h14l-3,6z" fill="#cfcfcf"/>
<path d="M94,24v-7l4,-2h6l2,2v9" fill="none" stroke="#cfcfcf" stroke-width="1.3"/>
<path d="M125,15h18v20h-18z" fill="#c8c8c8"/><rect x="129" y="17" width="10" height="6" fill="#444"/><rect x="130" y="27" width="9" height="8" fill="#444"/><rect x="133" y="28" width="3" height="6" fill="#c8c8c8"/>
<path d="M162,26h7v-3l5,4l-5,4v-3h-7z" fill="#e0e0e0"/><path d="M204,26h7v-3l5,4l-5,4v-3h-7z" fill="#e0e0e0"/>
<path d="M236,21L244,14V18C254,18 256,28 250,35C251,28 248,24 244,24V28Z" fill="#bdbdbd"/>
<path d="M288,21L280,14V18C270,18 268,28 274,35C273,28 276,24 280,24V28Z" fill="#484a4a"/>
<!-- create icons -->
<g fill="#c4c4c4"><path d="M468,18h6M471,15v6M501,18h6M504,15v6M538,18h6M541,15v6M574,18h6M577,15v6M610,18h6M613,15v6M647,18h6M650,15v6M683,18h6M686,15v6" stroke="#c4c4c4" stroke-width="1.5"/>
<circle cx="476" cy="27" r="4"/><circle cx="486" cy="27" r="4"/><rect x="473" y="30" width="14" height="11"/><path d="M488,33l5,-3v10l-5,-3z"/>
<path d="M525,23l4,4l-3,3l-4,-4z"/><path d="M523,27L508,38M525,30L518,41M527,31L527,41M524,24L510,30" stroke="#c4c4c4" fill="none"/>
<path d="M551,20v22M540,31h22M543,23l16,16M559,23l-16,16" stroke="#aaa" stroke-dasharray="3 2" fill="none"/><circle cx="551" cy="31" r="3"/>
<circle cx="588" cy="31" r="9" fill="none" stroke="#c4c4c4" stroke-width="2"/><circle cx="588" cy="31" r="5" fill="none" stroke="#999" stroke-dasharray="1 1.5" stroke-width="2"/>
<path d="M628,18l5,5l-9,9l-5,-5z"/><path d="M618,31l-6,9M621,33l-3,8M616,29l-8,6" stroke="#c4c4c4" fill="none"/>
<rect x="650" y="32" width="9" height="9" fill="none" stroke="#c4c4c4" stroke-width="1.3"/><circle cx="660" cy="29" r="5.5"/><path d="M665,25l4,-5l3,7z" fill="none" stroke="#c4c4c4" stroke-width="1.3"/>
</g>
<circle cx="698" cy="31" r="7.5" fill="none" stroke="#a8a8a8" stroke-width="2.2" stroke-dasharray="4 2.6"/>
<path d="M721,14.5V34.5" stroke="#d0d0d0"/><rect x="723" y="14" width="14" height="5" fill="#666"/><rect x="723" y="22" width="12" height="5" fill="#7a7a7a"/><rect x="723" y="30" width="19" height="5" fill="#6c6c6c"/>
<!-- center tools -->
<rect x="916" y="14" width="24" height="23" fill="#555"/>
<g stroke="#363838" stroke-width="1"><path d="M916,19h24M916,24h24M916,29h24M916,34h24M921,14v23M926,14v23M931,14v23M936,14v23"/></g>
<rect x="922" y="22" width="14" height="9" fill="#ddd"/><g stroke="#555"><path d="M926,22v9M931,22v9M922,26.5h14"/></g>
<circle cx="965" cy="25" r="12" fill="none" stroke="#aaa" stroke-width="1.5"/><path d="M965,16l4,5h-8zM965,34l4,-5h-8zM956,25l5,4v-8zM974,25l-5,4v-8z" fill="#bbb"/><circle cx="965" cy="25" r="2" fill="#bbb"/>
<path d="M995,15L1009,28H1005V36H1002V32L998,36L995,34Z" fill="none" stroke="#f3bc22" stroke-width="2.2"/>
<g fill="none" stroke="#b5b5b5" stroke-width="2.2"><circle cx="1034" cy="27" r="8.5"/><path d="M1075,19a8.5,8.5 0 1 0 3,14"/></g><circle cx="1034" cy="27" r="4" fill="none" stroke="#999"/>
<path d="M1107,16l4,5h-3v4h4v-3l5,4l-5,4v-3h-4v4h3l-4,5l-4,-5h3v-4h-4v3l-5,-4l5,-4v3h4v-4h-3z" fill="#bdbdbd"/>
<rect x="1133" y="29" width="8" height="8" fill="none" stroke="#d0d0d0" stroke-width="1.3"/><rect x="1138" y="23" width="12" height="11" fill="none" stroke="#d0d0d0" stroke-width="1.3"/>
<path d="M1175,18c4,-3 7,2 4,6l4,6c4,-1 6,5 2,7c-4,1 -5,-2 -6,-3l-5,-7c-3,0 -5,-5 -1,-9z" fill="none" stroke="#777" stroke-width="1.5"/>
<path d="M1208,14h10l-5,8zM1208,36V20l5,8l5,-8V36" fill="none" stroke="#888" stroke-width="2.5"/><path d="M1208,14h11l-5,8z" fill="#c4c4c4"/>
<path d="M1242,28l8,-8h6v4h-4l-6,10z" fill="none" stroke="#bbb" stroke-width="1.3"/><path d="M1252,21l8,8l-8,8l-8,-8z" fill="#c8c8c8"/>
<circle cx="1288" cy="23" r="6.5" fill="#8c8c8c"/><path d="M1279,38c0,-6 4,-9 9,-9s9,3 9,9z" fill="#bdbdbd"/>
<use href="#pc" x="1035" y="20"/><use href="#pc" x="1071" y="20"/><use href="#pc" x="1107" y="20"/><use href="#pc" x="1142" y="20"/><use href="#pc" x="1181" y="20"/><use href="#pc" x="1216" y="20"/><use href="#pc" x="1252" y="20"/><use href="#pc" x="1288" y="20"/><use href="#pc" x="1324" y="20"/>
<use href="#cam" x="1325" y="27" transform="translate(-3 0)"/>
<path d="M1352,14L1352,30L1357,26L1361,35L1364,33L1361,25L1367,25Z" fill="none" stroke="#bbb" stroke-width="1.3"/><use href="#pg" x="1368" y="19"/>
<circle cx="1397" cy="29" r="8" fill="#777" stroke="#bbb"/><use href="#pg" x="1405" y="19"/>
<use href="#cam" x="1434" y="28"/><use href="#pg" x="1440" y="18"/>
<use href="#cam" x="1473" y="24"/>
<path d="M1817,25l11,-11l11,11h-3v15h-16v-15z" fill="#c8c8c8"/>
<path d="M1858,22L1858,34L1862,30L1865,36L1868,34L1864,29L1869,29ZM1867,18c1,-3 6,-3 6,1c0,3 -3,3 -3,6M1870,27v2" fill="#d0d0d0" stroke="#d0d0d0" stroke-width=".6"/>
<circle cx="1899" cy="25" r="9" fill="none" stroke="#d0d0d0" stroke-width="1.6"/><path d="M1896,22c0,-4 6,-4 6,0c0,2.5 -3,2.5 -3,5M1899,29v2" fill="none" stroke="#d0d0d0" stroke-width="1.5"/>
<text x="1822" y="35" font-family="Liberation Sans" font-size="10" fill="#444">DS</text>
<!-- panel menus -->
<use href="#men" x="408" y="55"/><use href="#men" x="1514" y="54"/><use href="#men" x="1543" y="60"/><use href="#men" x="1504" y="87"/><use href="#men" x="1544" y="512"/><use href="#men" x="1905" y="966"/>
<!-- search icons -->
<g fill="none" stroke="#888" stroke-width="1.6"><circle cx="165" cy="102" r="4.5"/><path d="M161,106L155,112" stroke-width="2.6"/><circle cx="1575" cy="67" r="4.5"/><path d="M1571,71L1565,77" stroke-width="2.6"/><circle cx="1717" cy="518" r="4.5"/><path d="M1713,522L1707,528" stroke-width="2.6"/></g>
<!-- left list -->
<g color="#111"><use href="#ad" x="10" y="162"/><use href="#tr" x="25" y="161"/><use href="#ar" x="20" y="181"/><use href="#ar" x="20" y="201"/><use href="#ar" x="20" y="221"/><use href="#ar" x="20" y="241"/></g>
<use href="#mat" x="35" y="181"/><use href="#mat" x="35" y="201"/><use href="#mat" x="35" y="221"/><use href="#mat" x="35" y="241"/>
<rect x="9" y="900" width="14" height="15" fill="#555" stroke="#777"/><path d="M11,907L15,912L22,902" fill="none" stroke="#f3bc22" stroke-width="2.6"/>
<rect x="1561" y="901" width="14" height="15" fill="#555" stroke="#777"/><path d="M1563,908L1567,913L1574,903" fill="none" stroke="#f3bc22" stroke-width="2.6"/>
<!-- gears -->
<g color="#4a4a4a"><use href="#gear" x="375" y="126"/><use href="#gear" x="375" y="166"/><use href="#gear" x="375" y="206"/><use href="#gear" x="375" y="246"/><use href="#gear" x="375" y="326"/><use href="#gear" x="375" y="366"/><use href="#gear" x="375" y="406"/><use href="#gear" x="375" y="446"/><use href="#gear" x="375" y="486"/><use href="#gear" x="375" y="526"/><use href="#gear" x="375" y="566"/><use href="#gear" x="375" y="606"/><use href="#gear" x="375" y="646"/><use href="#gear" x="375" y="686"/><use href="#gear" x="375" y="726"/><use href="#gear" x="375" y="766"/><use href="#gear" x="375" y="806"/><use href="#gear" x="375" y="846"/><use href="#gear" x="375" y="886"/><use href="#gear" x="1909" y="541"/></g>
<use href="#gear" x="375" y="287" color="#e4e4e4"/>
<path d="M361,293l-6,-6a3.5,3.5 0 0 1 6,-3a3.5,3.5 0 0 1 6,3z" fill="none" stroke="#e4e4e4" stroke-width="1.5"/>
<circle cx="344" cy="289" r="3.5" fill="none" stroke="#e4e4e4" stroke-width="1.4"/><path d="M346,285a3,3 0 0 1 6,0v2" fill="none" stroke="#e4e4e4" stroke-width="1.4"/>
<path d="M370,221h10l-5,7z" fill="#d4d4d4"/>
<!-- slider arrows on full thumbs -->
<path d="M332,261v6l3,-3zM332,901v6l3,-3zM1867,556v6l4,-3z" fill="#0c0c0c"/>
<!-- vp icons -->
<rect x="1289" y="81" width="14" height="14" fill="none" stroke="#ddd"/><path d="M1289,95L1303,81" stroke="#ddd"/><path d="M1291,93l10,-10v10z" fill="#ddd" opacity=".6"/>
<path d="M1319,76l8,4v8l-8,5l-8,-5v-8z" fill="#777"/><path d="M1326,94h8l-4,6z" fill="#ccc"/>
<path d="M1473,84h8l-4,7z" fill="#ccc"/>
<rect x="1344" y="80" width="11" height="13" fill="none" stroke="#d0d0d0" stroke-width="1.2"/><path d="M1349.5,80v13M1344,86h11M1342,94h15" stroke="#d0d0d0"/>
<ellipse cx="1503" cy="118" rx="9" ry="3.5" fill="none" stroke="#e6e6e6" stroke-width="2.2"/><circle cx="1505" cy="112" r="3.5" fill="#e6e6e6"/><path d="M1509,116l5,3l-4,2z" fill="#e6e6e6"/>
<path d="M1504,131l4,5h-3v3h3v-3l5,5l-5,5v-3h-3v3h3l-4,5l-4,-5h3v-3h-3v3l-5,-5l5,-5v3h3v-3h-3z" fill="#e6e6e6"/>
<circle cx="1507" cy="165" r="5.5" fill="none" stroke="#e6e6e6" stroke-width="2"/><path d="M1503,169L1495,177" stroke="#e6e6e6" stroke-width="3"/>
<path d="M1495,190v-4h4M1510,186h4v4M1514,201v4h-4M1499,205h-4v-4M1504,193v5M1501.5,195.5h5" fill="none" stroke="#e6e6e6" stroke-width="1.6"/>
<circle cx="1503" cy="222" r="10" fill="#e6e6e6"/><path d="M1503,214l6,7h-3v9h-6v-9h-3z" fill="#333"/>
<path d="M1870,69l8,-5v10zM1905,69l-8,-5v10z" fill="#d0d0d0"/><rect x="1878" y="67" width="4" height="4" fill="#d0d0d0" transform="translate(-2 0)"/><rect x="1893" y="67" width="5" height="4" fill="#d0d0d0"/>
<!-- scene rows -->
<g color="#cfcfcf">
<use href="#eye" x="1570" y="114"/><use href="#cur" x="1591" y="114"/><use href="#eye" x="1570" y="134"/><use href="#cur" x="1591" y="134"/><use href="#eye" x="1570" y="154"/><use href="#cur" x="1591" y="154"/><use href="#eye" x="1570" y="174"/><use href="#cur" x="1591" y="174"/><use href="#eye" x="1570" y="194"/><use href="#cur" x="1591" y="194"/><use href="#eye" x="1570" y="214"/><use href="#cur" x="1591" y="214"/><use href="#eye" x="1570" y="234"/><use href="#cur" x="1591" y="234"/><use href="#eye" x="1570" y="254"/><use href="#cur" x="1591" y="254"/><use href="#eye" x="1570" y="274"/><use href="#cur" x="1591" y="274"/><use href="#eye" x="1570" y="294"/><use href="#cur" x="1591" y="294"/><use href="#eye" x="1570" y="314"/><use href="#cur" x="1591" y="314"/><use href="#eye" x="1570" y="334"/><use href="#cur" x="1591" y="334"/><use href="#eye" x="1570" y="354"/><use href="#cur" x="1591" y="354"/><use href="#eye" x="1570" y="374"/><use href="#cur" x="1591" y="374"/><use href="#eye" x="1570" y="394"/><use href="#cur" x="1591" y="394"/><use href="#eye" x="1570" y="414"/><use href="#cur" x="1591" y="414"/><use href="#eye" x="1570" y="454"/><use href="#cur" x="1591" y="454"/>
<use href="#ad" x="1696" y="114"/><use href="#bn" x="1711" y="114"/><use href="#bn" x="1721" y="134"/><use href="#ar" x="1707" y="154"/><use href="#bn" x="1721" y="154"/><use href="#ar" x="1707" y="174"/><use href="#bn" x="1721" y="174"/><use href="#bn" x="1721" y="194"/><use href="#bn" x="1721" y="214"/><use href="#bn" x="1721" y="234"/><use href="#bn" x="1721" y="254"/><use href="#ar" x="1707" y="274"/><use href="#tr" x="1721" y="274"/><use href="#ar" x="1707" y="294"/><use href="#tr" x="1721" y="294"/><use href="#bn" x="1681" y="314"/><use href="#bn" x="1681" y="334"/>
<use href="#ar" x="1627" y="354"/><use href="#tr" x="1641" y="354"/><use href="#ar" x="1627" y="374"/><use href="#tr" x="1641" y="374"/><use href="#ar" x="1627" y="394"/><use href="#tr" x="1641" y="394"/><use href="#ar" x="1617" y="414"/><circle cx="1631" cy="414" r="6.5" fill="none" stroke="#cfcfcf" stroke-width="1.5" stroke-dasharray="3.5 2.5"/><use href="#ar" x="1607" y="454"/><use href="#tr" x="1621" y="454"/>
</g>
<g color="#0e0e0e"><use href="#eye" x="1570" y="434"/><use href="#cur" x="1591" y="434"/><use href="#ar" x="1607" y="434"/><use href="#tr" x="1621" y="434"/></g>
<rect x="1906" y="438" width="5" height="26" rx="2" fill="#333"/>
<!-- params tree -->
<g color="#cfcfcf"><use href="#ad" x="1562" y="604"/><use href="#tr" x="1577" y="603"/><use href="#ad" x="1572" y="624"/><use href="#ad" x="1582" y="644"/><use href="#ar" x="1573" y="763"/></g>
<g color="#0e0e0e"><use href="#ar" x="1573" y="743"/></g>
<circle cx="1587" cy="740" r="5" fill="#6e4d10"/><path d="M1580,752c0,-6 3,-8 7,-8s7,2 7,8z" fill="#111"/>
<path d="M1672,517h10l-5,7z" fill="#ccc"/><path d="M1723,538L1707,565H1723Z" fill="#e8b628" stroke="#222"/><path d="M1705,542L1722,568M1713,541L1708,566" stroke="#dcdcdc" stroke-width="1.3"/>
<!-- bottom dropdown -->
<path d="M1688,988h9l-4.5,7z" fill="#c0c0c0"/>
<rect x="1708" y="982" width="17" height="20" fill="#4e4e4e"/><path d="M1709,990l15,-4v3h-15zM1709,991h15v8h-15z" fill="#323232"/>
<path d="M953,953h6l-3,4zM961,957h6l-3,-4z" fill="#6a6a6a"/>
<!-- taskbar icons -->
<path d="M16,1018l6,-1v6.5h-6zM23,1016.5l9,-1.5v8.5h-9zM16,1024.5h6v6.5l-6,-1zM23,1024.5h9v8.5l-9,-1.5z" fill="#fff"/>
<circle cx="68" cy="1024" r="7.5" fill="none" stroke="#111" stroke-width="2.8"/>
<path d="M367,1017a4,4 0 0 1 8,0v8a4,4 0 0 1 -8,0zM364,1024a7,7 0 0 0 14,0M371,1031v3M367,1034h8" fill="none" stroke="#444" stroke-width="1.3"/>
<path d="M409,1018h14M409,1032h14M410,1021h10v8h-10z" fill="none" stroke="#ddd" stroke-width="1.3"/><rect x="422" y="1021" width="3" height="3" fill="#ddd"/>
<path d="M456,1017h8l2,2h11v17h-21z" fill="#f0c24f"/><rect x="456" y="1022" width="21" height="14" fill="#f8d775"/><rect x="462" y="1029" width="9" height="7" fill="#2f8fd0"/>
<circle cx="515" cy="1024" r="10.5" fill="#e8582a"/><circle cx="516" cy="1025" r="6" fill="#5d2fa0"/><path d="M512,1014c8,0 12,5 12,11c0,6 -6,9 -10,8c5,-1 8,-5 6,-9l-5,-1c0,-4 -2,-6 -3,-9z" fill="#ff9a20"/>
<circle cx="565" cy="1024" r="12" fill="#fff"/>
<circle cx="614" cy="1024" r="10" fill="none" stroke="#19c2e8" stroke-width="2.8"/><path d="M607,1035l5,-3h-3z" fill="#19c2e8"/>
<g fill="none" stroke="#e8e8e8" stroke-width="1.2"><circle cx="1676" cy="1019" r="3"/><circle cx="1669" cy="1024" r="2.6"/><path d="M1666,1033c0,-4 2,-6 4,-6M1672,1028c3,-3 9,-2 10,2"/>
<path d="M1703,1027l6,-6l6,6" stroke-width="1.6"/>
<path d="M1726,1032a12,12 0 0 1 12,-12M1730,1032a8,8 0 0 1 8,-8M1734,1032a4,4 0 0 1 4,-4" stroke="#999" stroke-dasharray="1.4 1"/>
<path d="M1750,1021h3l5,-4v15l-5,-4h-3zM1761,1021a5,5 0 0 1 0,7M1764,1018a9,9 0 0 1 0,13"/>
<path d="M1778,1030c4,-8 8,-13 11,-13l2,2c-2,4 -6,8 -10,14l-3,-1zM1782,1032c3,1 6,-1 9,-4l3,2"/></g>
<path d="M1726,1020h5M1728.5,1017v6" stroke="#ddd"/>
<path d="M1879,1016h16v11h-8l-4,4v-4h-4z" fill="#fff"/><path d="M1882,1019h10M1882,1022h10" stroke="#555"/>
</svg>
</body></html>
